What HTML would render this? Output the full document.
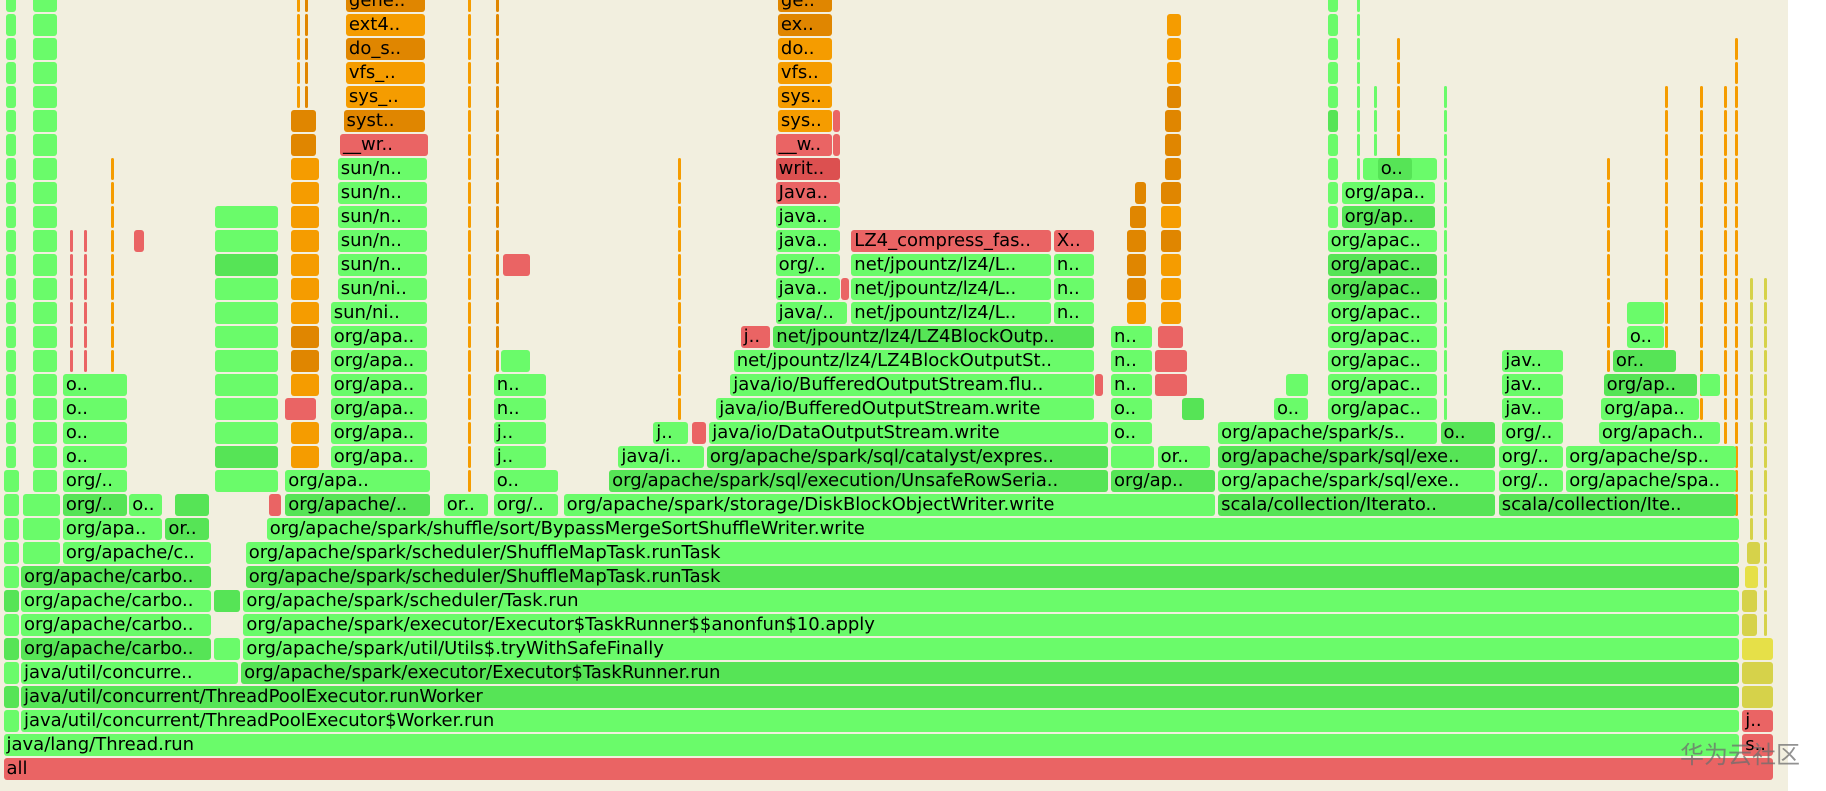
<!DOCTYPE html>
<html><head><meta charset="utf-8">
<style>
html,body{margin:0;padding:0;}
body{width:1826px;height:791px;position:relative;overflow:hidden;background:#fff;font-family:"DejaVu Sans","Liberation Sans",sans-serif;}
#bg{position:absolute;left:0;top:0;width:1788px;height:791px;background:#f2efdf;}
.b{position:absolute;height:22px;border-radius:3px;overflow:hidden;white-space:nowrap;font-size:18px;line-height:22px;color:#000;box-sizing:border-box;padding-left:3px;}
#wm{position:absolute;left:1680px;top:735px;font-family:"Noto Sans CJK SC",sans-serif;font-size:24px;color:rgba(110,110,110,0.75);}
</style></head><body>
<div id="bg"></div>
<div id="fg"></div>
<div id="wm">华为云社区</div>
<script>
var S=1826/1568;
var C={g:"#6afb6a",h:"#56e456",r:"#ea6464",R:"#dc5050",o:"#f59c00",O:"#e08600",y:"#d6d24a",Y:"#e6e048"};
var D=[
[0,3,1523,"r","all"],
[1,3,1494,"g","java/lang/Thread.run"],[1,1496,1523,"r","s.."],
[2,3,17,"g",""],[2,18,1494,"g","java/util/concurrent/ThreadPoolExecutor$Worker.run"],[2,1496,1523,"r","j.."],
[3,3,17,"h",""],[3,18,1494,"h","java/util/concurrent/ThreadPoolExecutor.runWorker"],[3,1496,1523,"y",""],
[4,3,17,"g",""],[4,18,205,"g","java/util/concurre.."],[4,207,1494,"h","org/apache/spark/executor/Executor$TaskRunner.run"],[4,1496,1523,"y",""],
[5,3,17,"h",""],[5,18,182,"h","org/apache/carbo.."],[5,184,207,"g",""],[5,209,1494,"g","org/apache/spark/util/Utils$.tryWithSafeFinally"],[5,1496,1523,"Y",""],
[6,3,17,"g",""],[6,18,182,"g","org/apache/carbo.."],[6,209,1494,"g","org/apache/spark/executor/Executor$TaskRunner$$anonfun$10.apply"],[6,1496,1510,"y",""],
[7,3,17,"h",""],[7,18,182,"g","org/apache/carbo.."],[7,184,207,"h",""],[7,209,1494,"g","org/apache/spark/scheduler/Task.run"],[7,1496,1510,"y",""],
[8,3,17,"g",""],[8,18,182,"h","org/apache/carbo.."],[8,211,1494,"h","org/apache/spark/scheduler/ShuffleMapTask.runTask"],[8,1498,1510,"Y",""],
[9,3,17,"g",""],[9,20,52,"g",""],[9,54,182,"g","org/apache/c.."],[9,211,1494,"g","org/apache/spark/scheduler/ShuffleMapTask.runTask"],[9,1500,1512,"y",""],
[10,3,17,"g",""],[10,20,52,"g",""],[10,54,140,"g","org/apa.."],[10,142,180,"h","or.."],[10,229,1494,"g","org/apache/spark/shuffle/sort/BypassMergeSortShuffleWriter.write"],
[11,3,17,"g",""],[11,20,52,"g",""],[11,54,110,"h","org/.."],[11,111,140,"g","o.."],[11,150,180,"h",""],[11,231,242,"r",""],[11,245,370,"h","org/apache/.."],[11,381,420,"g","or.."],[11,424,480,"g","org/.."],[11,484,1044,"g","org/apache/spark/storage/DiskBlockObjectWriter.write"],[11,1046,1285,"h","scala/collection/Iterato.."],[11,1287,1492,"h","scala/collection/Ite.."],
[12,3,17,"g",""],[12,28,50,"g",""],[12,54,110,"g","org/.."],[12,185,240,"g",""],[12,245,370,"g","org/apa.."],[12,424,480,"g","o.."],[12,523,952,"h","org/apache/spark/sql/execution/UnsafeRowSeria.."],[12,954,1044,"h","org/ap.."],[12,1046,1285,"g","org/apache/spark/sql/exe.."],[12,1287,1343,"g","org/.."],[12,1345,1492,"g","org/apache/spa.."],
[13,5,15,"g",""],[13,28,50,"g",""],[13,54,110,"g","o.."],[13,185,240,"h",""],[13,250,275,"o",""],[13,284,368,"g","org/apa.."],[13,424,470,"g","j.."],[13,531,605,"g","java/i.."],[13,607,952,"h","org/apache/spark/sql/catalyst/expres.."],[13,954,992,"g",""],[13,994,1040,"g","or.."],[13,1046,1285,"h","org/apache/spark/sql/exe.."],[13,1287,1343,"g","org/.."],[13,1345,1492,"g","org/apache/sp.."],
[14,5,15,"g",""],[14,28,50,"g",""],[14,54,110,"g","o.."],[14,185,240,"g",""],[14,250,275,"o",""],[14,284,368,"g","org/apa.."],[14,424,470,"g","j.."],[14,561,592,"g","j.."],[14,594,607,"r",""],[14,609,952,"g","java/io/DataOutputStream.write"],[14,954,990,"g","o.."],[14,1046,1235,"g","org/apache/spark/s.."],[14,1237,1285,"h","o.."],[14,1290,1343,"g","org/.."],[14,1373,1478,"g","org/apach.."],
[15,5,15,"g",""],[15,28,50,"g",""],[15,54,110,"g","o.."],[15,185,240,"g",""],[15,245,272,"r",""],[15,284,368,"g","org/apa.."],[15,424,470,"g","n.."],[15,615,940,"g","java/io/BufferedOutputStream.write"],[15,954,990,"g","o.."],[15,1015,1035,"h",""],[15,1094,1124,"g","o.."],[15,1140,1235,"g","org/apac.."],[15,1290,1343,"g","jav.."],[15,1375,1460,"g","org/apa.."],
[16,5,15,"g",""],[16,28,50,"g",""],[16,54,110,"g","o.."],[16,185,240,"g",""],[16,250,275,"o",""],[16,284,368,"g","org/apa.."],[16,424,470,"g","n.."],[16,627,940,"g","java/io/BufferedOutputStream.flu.."],[16,940,948,"r",""],[16,954,990,"g","n.."],[16,992,1020,"r",""],[16,1104,1124,"g",""],[16,1140,1235,"g","org/apac.."],[16,1290,1343,"g","jav.."],[16,1377,1458,"h","org/ap.."],[16,1460,1478,"g",""],
[17,5,15,"g",""],[17,28,50,"g",""],[17,185,240,"g",""],[17,250,275,"O",""],[17,284,368,"g","org/apa.."],[17,430,456,"g",""],[17,630,940,"g","net/jpountz/lz4/LZ4BlockOutputSt.."],[17,954,990,"g","n.."],[17,992,1020,"r",""],[17,1140,1235,"g","org/apac.."],[17,1290,1343,"g","jav.."],[17,1385,1440,"h","or.."],
[18,5,15,"g",""],[18,28,50,"g",""],[18,185,240,"g",""],[18,250,275,"O",""],[18,284,368,"g","org/apa.."],[18,636,662,"r","j.."],[18,664,940,"h","net/jpountz/lz4/LZ4BlockOutp.."],[18,954,990,"g","n.."],[18,994,1017,"r",""],[18,1140,1235,"g","org/apac.."],[18,1397,1430,"g","o.."],
[19,5,15,"g",""],[19,28,50,"g",""],[19,185,240,"g",""],[19,250,275,"o",""],[19,284,368,"g","sun/ni.."],[19,666,728,"g","java/.."],[19,731,903,"g","net/jpountz/lz4/L.."],[19,905,940,"g","n.."],[19,968,985,"o",""],[19,997,1015,"o",""],[19,1140,1235,"g","org/apac.."],[19,1397,1430,"g",""],
[20,5,15,"g",""],[20,28,50,"g",""],[20,185,240,"g",""],[20,250,275,"o",""],[20,290,368,"g","sun/ni.."],[20,666,722,"g","java.."],[20,722,730,"r",""],[20,731,903,"g","net/jpountz/lz4/L.."],[20,905,940,"g","n.."],[20,968,985,"O",""],[20,997,1015,"o",""],[20,1140,1235,"h","org/apac.."],
[21,5,15,"g",""],[21,28,50,"g",""],[21,185,240,"h",""],[21,250,275,"o",""],[21,290,368,"g","sun/n.."],[21,432,456,"r",""],[21,666,722,"g","org/.."],[21,731,903,"g","net/jpountz/lz4/L.."],[21,905,940,"g","n.."],[21,968,985,"O",""],[21,997,1015,"o",""],[21,1140,1235,"h","org/apac.."],
[22,5,15,"g",""],[22,28,50,"g",""],[22,115,125,"r",""],[22,185,240,"g",""],[22,250,275,"o",""],[22,290,368,"g","sun/n.."],[22,666,722,"g","java.."],[22,731,903,"r","LZ4_compress_fas.."],[22,905,940,"r","X.."],[22,968,985,"O",""],[22,997,1015,"O",""],[22,1140,1235,"g","org/apac.."],
[23,5,15,"g",""],[23,28,50,"g",""],[23,185,240,"g",""],[23,250,275,"o",""],[23,290,368,"g","sun/n.."],[23,666,722,"g","java.."],[23,970,985,"O",""],[23,997,1015,"o",""],[23,1140,1150,"g",""],[23,1152,1233,"h","org/ap.."],
[24,5,15,"g",""],[24,28,50,"g",""],[24,250,275,"o",""],[24,290,368,"g","sun/n.."],[24,666,722,"r","Java.."],[24,975,985,"O",""],[24,997,1015,"O",""],[24,1140,1150,"g",""],[24,1152,1233,"g","org/apa.."],
[25,5,15,"g",""],[25,28,50,"g",""],[25,250,275,"o",""],[25,290,368,"g","sun/n.."],[25,666,722,"R","writ.."],[25,1000,1015,"O",""],[25,1140,1150,"g",""],[25,1170,1235,"g",""],[25,1183,1213,"h","o.."],
[26,5,15,"g",""],[26,28,50,"g",""],[26,250,272,"O",""],[26,292,368,"r","__wr.."],[26,666,715,"r","__w.."],[26,715,722,"r",""],[26,1000,1015,"O",""],[26,1140,1150,"g",""],
[27,5,15,"g",""],[27,28,50,"g",""],[27,250,272,"O",""],[27,295,366,"O","syst.."],[27,668,715,"o","sys.."],[27,715,722,"r",""],[27,1000,1015,"O",""],[27,1140,1150,"h",""],
[28,5,15,"g",""],[28,28,50,"g",""],[28,297,366,"o","sys_.."],[28,668,715,"o","sys.."],[28,1002,1015,"O",""],[28,1140,1150,"g",""],
[29,5,15,"g",""],[29,28,50,"g",""],[29,297,366,"o","vfs_.."],[29,668,715,"o","vfs.."],[29,1002,1015,"o",""],[29,1140,1150,"g",""],
[30,5,15,"g",""],[30,28,50,"g",""],[30,297,366,"O","do_s.."],[30,668,715,"o","do.."],[30,1002,1015,"o",""],[30,1140,1150,"g",""],
[31,5,15,"g",""],[31,28,50,"g",""],[31,297,366,"o","ext4.."],[31,668,715,"O","ex.."],[31,1002,1015,"o",""],[31,1140,1150,"g",""],
[32,5,15,"g",""],[32,28,50,"g",""],[32,297,366,"O","gene.."],[32,668,715,"O","ge.."],[32,1140,1150,"g",""]
];
var thin=[[60,"r",8,22],[72,"r",8,22],[95,"o",10,25],[255,"o",8,32],[262,"O",8,32],[402,"o",10,32],[426,"O",8,32],[582,"o",12,25],[1165,"g",14,32],[1180,"g",16,28],[1430,"o",10,28],[1460,"o",8,28],[1480,"o",10,28],[1490,"o",8,30],[1503,"y",6,20],[1515,"y",6,20],[1240,"g",12,28],[1380,"o",12,25],[1200,"o",8,30]];
var h="";
thin.forEach(function(t){for(var k=t[2];k<=t[3];k++){var x=t[0]*S;h+='<div class="b" style="left:'+x.toFixed(1)+'px;top:'+(758-24*k)+'px;width:3px;padding:0;background:'+C[t[1]]+'"></div>';}});
D.forEach(function(d){var x=d[1]*S,w=(d[2]-d[1])*S-1;h+='<div class="b" style="left:'+x.toFixed(1)+'px;top:'+(758-24*d[0])+'px;width:'+w.toFixed(1)+'px;background:'+C[d[3]]+'">'+d[4]+'</div>';});
document.getElementById("fg").innerHTML=h;
</script>
</body></html>
